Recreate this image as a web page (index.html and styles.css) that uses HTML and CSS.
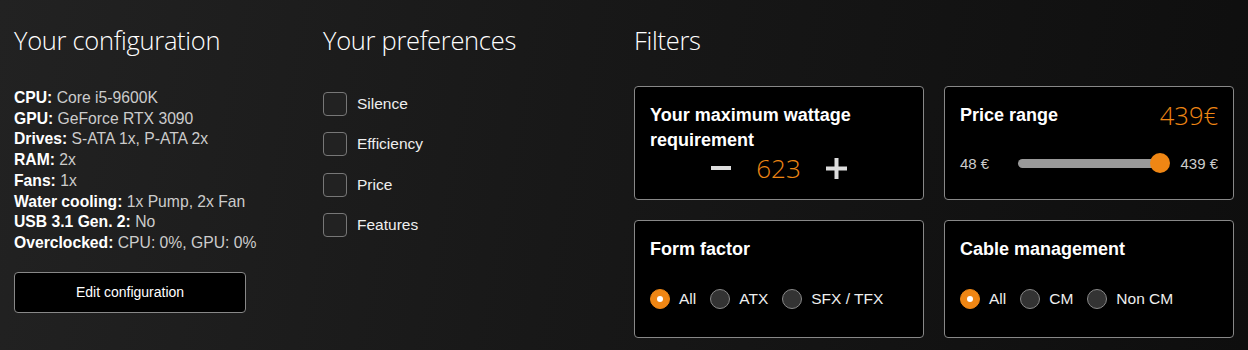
FILE: index.html
```html
<!DOCTYPE html>
<html lang="en">
<head>
    <meta charset="UTF-8">
    <meta name="viewport" content="width=device-width, initial-scale=1.0">
    <title>PSU Finder</title>
    <link rel="stylesheet" href="styles.css">
</head>
<body>

    <div id="page">
        <!-- configuracion -->
        <div class="col">
            <h2>Your configuration</h2>
            <ul class="config">
                <li><b>CPU:</b> Core i5-9600K</li>
                <li><b>GPU:</b> GeForce RTX 3090</li>
                <li><b>Drives:</b> S-ATA 1x, P-ATA 2x</li>
                <li><b>RAM:</b> 2x</li>
                <li><b>Fans:</b> 1x</li>
                <li><b>Water cooling:</b> 1x Pump, 2x Fan</li>
                <li><b>USB 3.1 Gen. 2:</b> No</li>
                <li><b>Overclocked:</b> CPU: 0%, GPU: 0%</li>
            </ul>
            <button class="edit-btn">Edit configuration</button>
        </div>

        <!-- preferencias -->
        <div class="col">
            <h2>Your preferences</h2>
            <div class="prefs">
                <label class="pref"><span class="check"></span>Silence</label>
                <label class="pref"><span class="check"></span>Efficiency</label>
                <label class="pref"><span class="check"></span>Price</label>
                <label class="pref"><span class="check"></span>Features</label>
            </div>
        </div>

        <!-- filtros -->
        <div class="col">
            <h2>Filters</h2>
            <div class="filters">
                <div class="card">
                    <h3>Your maximum wattage requirement</h3>
                    <div class="stepper">
                        <svg width="20" height="20" viewBox="0 0 20 20"><rect x="0" y="8" width="20" height="4" fill="#ddd"/></svg>
                        <span class="accent num">623</span>
                        <svg width="21" height="21" viewBox="0 0 21 21"><rect x="0" y="8.5" width="21" height="4" fill="#ddd"/><rect x="8.5" y="0" width="4" height="21" fill="#ddd"/></svg>
                    </div>
                </div>

                <div class="card">
                    <div class="card-head">
                        <h3>Price range</h3>
                        <span class="accent price">439€</span>
                    </div>
                    <div class="range">
                        <span>48 €</span>
                        <div class="track"><span class="thumb"></span></div>
                        <span>439 €</span>
                    </div>
                </div>

                <div class="card">
                    <h3>Form factor</h3>
                    <div class="radios">
                        <label class="opt"><span class="radio on"></span>All</label>
                        <label class="opt"><span class="radio"></span>ATX</label>
                        <label class="opt"><span class="radio"></span>SFX / TFX</label>
                    </div>
                </div>

                <div class="card">
                    <h3>Cable management</h3>
                    <div class="radios">
                        <label class="opt"><span class="radio on"></span>All</label>
                        <label class="opt"><span class="radio"></span>CM</label>
                        <label class="opt"><span class="radio"></span>Non CM</label>
                    </div>
                </div>
            </div>
        </div>
    </div>

</body>
</html>
```

FILE: styles.css
```css
body {
    margin: 0;
    padding: 0;
    height: 350px;
    background: linear-gradient(100deg, #222 0%, #181818 45%, #0e0e0e 100%);
    color: #ddd;
    font-family: "Liberation Sans", Arial, sans-serif;
    overflow: hidden;
}
#page {
    display: grid;
    grid-template-columns: 309px 311px 600px;
    padding: 25px 0 0 14px;
}
h2 {
    font-family: "Open Sans", "Liberation Sans", sans-serif;
    font-weight: 300;
    font-size: 25.5px;
    line-height: 30px;
    color: #fff;
    margin: 0 0 29px 0;
    letter-spacing: -0.3px;
}
.config {
    list-style: none;
    margin: 0;
    padding: 4px 0 0 0;
    font-size: 15.7px;
    line-height: 20.7px;
    color: #ccc;
}
.config b {
    color: #fff;
}
.edit-btn {
    margin-top: 18px;
    width: 232px;
    height: 41px;
    background: #000;
    color: #fff;
    border: 1px solid #888;
    border-radius: 4px;
    font-family: "Liberation Sans", Arial, sans-serif;
    font-size: 14px;
    cursor: pointer;
}

/* preferencias */
.prefs {
    display: flex;
    flex-direction: column;
    gap: 16.3px;
    padding-top: 8px;
}
.pref {
    display: flex;
    align-items: center;
    gap: 10px;
    font-size: 15.5px;
    color: #eee;
}
.check {
    width: 22px;
    height: 22px;
    border: 1px solid #777;
    border-radius: 4px;
    background: #222;
}

/* filtros */
.filters {
    display: grid;
    grid-template-columns: 290px 290px;
    grid-template-rows: 114px 118px;
    gap: 20px 20px;
    margin-top: 31px;
}
.card {
    background: #000;
    border: 1px solid #888;
    border-radius: 4px;
    padding: 16px 15px;
    box-sizing: border-box;
}
.card h3 {
    margin: 0;
    font-size: 18px;
    line-height: 25px;
    color: #fff;
}
.accent {
    color: #ef8614;
    font-family: "Open Sans", "Liberation Sans", sans-serif;
    font-weight: 300;
}
.stepper {
    display: flex;
    justify-content: center;
    align-items: center;
    gap: 25px;
}
.num {
    font-size: 26px;
    line-height: 30px;
}
.card-head {
    display: flex;
    justify-content: space-between;
    align-items: center;
}
.price {
    font-size: 25.5px;
    line-height: 25px;
}
.range {
    display: flex;
    align-items: center;
    margin-top: 27px;
    font-size: 15px;
    color: #ccc;
}
.track {
    flex: 1;
    position: relative;
    height: 9px;
    background: #999;
    border-radius: 5px;
    margin: 0 18px 0 29px;
}
.thumb {
    position: absolute;
    right: -8px;
    top: -6px;
    width: 20px;
    height: 20px;
    border-radius: 50%;
    background: #ef8614;
}
.radios {
    display: flex;
    align-items: center;
    gap: 14px;
    margin-top: 27px;
}
.opt {
    display: flex;
    align-items: center;
    gap: 9px;
    font-size: 15.5px;
    color: #eee;
}
.radio {
    width: 18px;
    height: 18px;
    border: 1px solid #888;
    border-radius: 50%;
    background: #333;
    position: relative;
}
.radio.on {
    background: #ef8614;
    border-color: #ef8614;
}
.radio.on::after {
    content: "";
    position: absolute;
    left: 6px;
    top: 6px;
    width: 6px;
    height: 6px;
    border-radius: 50%;
    background: #fff;
}
```
